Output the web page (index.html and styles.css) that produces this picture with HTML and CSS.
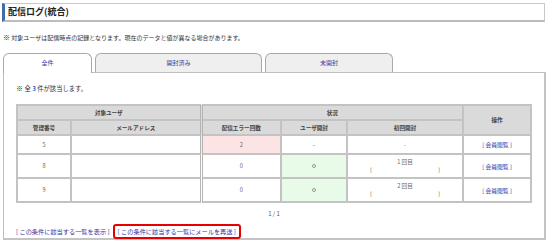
FILE: index.html
```html
<!DOCTYPE html>
<html lang="ja">
<head>
<meta charset="utf-8">
<title>配信ログ(統合)</title>
<link rel="stylesheet" href="styles.css">
</head>
<body>
<div class="title">配信ログ(統合)</div>
<p class="note"><span class="mark">※</span> 対象ユーザは配信時点の記録となります。現在のデータと値が異なる場合があります。</p>
<div class="tabs">
  <div class="tab tab1 active">全件</div>
  <div class="tab tab2">開封済み</div>
  <div class="tab tab3">未開封</div>
</div>
<div class="panel">
  <p class="count"><span class="mark">※</span> 全 <span class="num">3</span> 件が該当します。</p>
  <table class="log">
    <colgroup>
      <col class="c1"><col class="c2"><col class="c3"><col class="c4"><col class="c5"><col class="c6">
    </colgroup>
    <thead>
      <tr class="h1">
        <th colspan="2">対象ユーザ</th>
        <th colspan="3" class="grp">状況</th>
        <th rowspan="2">操作</th>
      </tr>
      <tr class="h2">
        <th>管理番号</th>
        <th>メールアドレス</th>
        <th class="grp">配信エラー回数</th>
        <th>ユーザ開封</th>
        <th>初回開封</th>
      </tr>
    </thead>
    <tbody>
      <tr class="r1">
        <td>5</td>
        <td></td>
        <td class="grp err">2</td>
        <td>–</td>
        <td>-</td>
        <td><a class="lnk">[ 会員閲覧 ]</a></td>
      </tr>
      <tr class="r2">
        <td>8</td>
        <td></td>
        <td class="grp">0</td>
        <td class="ok"><span class="circle"></span></td>
        <td><div class="first">1 回目</div><div class="paren"><span>(</span><span>)</span></div></td>
        <td><a class="lnk">[ 会員閲覧 ]</a></td>
      </tr>
      <tr class="r2">
        <td>9</td>
        <td></td>
        <td class="grp">0</td>
        <td class="ok"><span class="circle"></span></td>
        <td><div class="first">2 回目</div><div class="paren"><span>(</span><span>)</span></div></td>
        <td><a class="lnk">[ 会員閲覧 ]</a></td>
      </tr>
    </tbody>
  </table>
  <div class="pager">1 / 1</div>
  <div class="links">
    <a class="lnk">[ この条件に該当する一覧を表示 ]</a>
    <a class="lnk hl">[ この条件に該当する一覧にメールを再送 ]</a>
  </div>
</div>
</body>
</html>
```

FILE: styles.css
```css
* { box-sizing: border-box; }
body {
  margin: 0;
  width: 550px;
  font-family: "Noto Sans CJK JP", "Noto Sans", sans-serif;
  color: #444;
  background: #fff;
}
p { margin: 0; }
.title {
  margin: 3px 5px 0 2px;
  height: 19px;
  border: 1px solid #c8c8c8;
  border-left: 3px solid #3d6ea8;
  border-bottom: 2px solid #bcbcbc;
  padding-left: 3px;
  font-size: 9px;
  font-weight: bold;
  line-height: 16px;
  color: #222;
}
.note {
  margin: 11px 0 0 3px;
  font-size: 6px;
  line-height: 8px;
  color: #333;
}
.mark { font-weight: bold; color: #222; font-size: 7px; }
.tabs {
  display: flex;
  gap: 3px;
  margin: 11px 0 0 3px;
}
.tab {
  height: 19px;
  border: 1px solid #a9a9a9;
  border-bottom: none;
  border-radius: 6px 6px 0 0;
  background: #efefef;
  color: #3a3aa8;
  font-size: 6px;
  line-height: 18px;
  text-align: center;
}
.tab1 { width: 89px; }
.tab2 { width: 167px; }
.tab3 { width: 128px; }
.tab.active {
  background: #fff;
  position: relative;
  height: 20px;
  margin-bottom: -1px;
}
.panel {
  margin: 0 4px 0 3px;
  height: 168px;
  border: 1px solid #bdbdbd;
  border-right: 2px solid #c4c4c4;
  border-bottom: 2px solid #c4c4c4;
  padding: 11px 0 0 12px;
}
.count {
  font-size: 6.3px;
  line-height: 8px;
  color: #333;
}
.num { color: #2a5fb0; font-weight: bold; }
.log {
  margin-top: 11px;
  width: 514px;
  table-layout: fixed;
  border-collapse: collapse;
  border: 2px solid #c3c3c3;
  font-size: 5.6px;
  color: #666;
}
.c1 { width: 54px; }
.c2 { width: 130px; }
.c3 { width: 80px; }
.c4 { width: 66px; }
.c5 { width: 116px; }
.c6 { width: 68px; }
.log th, .log td {
  border: 2px solid #c3c3c3;
  text-align: center;
  padding: 0;
}
.log th {
  background: #dadada;
  color: #444;
  font-weight: bold;
}
.log .grp { border-left: 3px double #b5b5b5; }
.h1 th, .h2 th { height: 15px; }
.r1 td { height: 19px; }
.r2 td { height: 24px; }
.err { background: #fde4e4; }
.ok { background: #e8fbe8; }
.circle {
  display: inline-block;
  width: 4px;
  height: 4px;
  border: 1px solid #999;
  border-radius: 50%;
  vertical-align: middle;
}
.first { line-height: 8px; }
.paren {
  display: flex;
  justify-content: space-between;
  padding: 0 22px;
  line-height: 8px;
}
.lnk { color: #3333a0; text-decoration: none; font-size: 5.8px; }
.pager {
  margin-top: 7px;
  margin-left: -12px;
  text-align: center;
  font-size: 6px;
  line-height: 8px;
  color: #555;
}
.links {
  margin-top: 6px;
  display: flex;
  align-items: center;
}
.links .lnk { font-size: 6.2px; line-height: 11px; }
.links .hl {
  margin-left: 3px;
  border: 2px solid #e60000;
  border-radius: 3px;
  padding: 0 3px;
  width: 128px;
  height: 15px;
  white-space: nowrap;
}
```
